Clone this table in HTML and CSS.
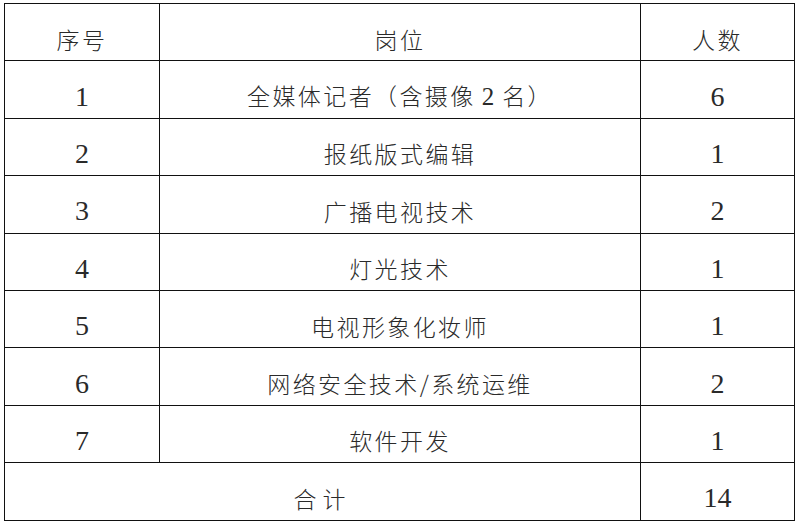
FILE: index.html
```html
<!DOCTYPE html>
<html lang="zh-CN">
<head>
<meta charset="utf-8">
<title>岗位表</title>
<link rel="stylesheet" href="styles.css">
</head>
<body>
<table class="jobs">
  <colgroup>
    <col class="c-no">
    <col class="c-post">
    <col class="c-num">
  </colgroup>
  <tr><td class="cjk">序号</td><td class="cjk">岗位</td><td class="cjk">人数</td></tr>
  <tr><td class="num">1</td><td class="cjk">全媒体记者（含摄像<span class="inline-num">2</span>名）</td><td class="num">6</td></tr>
  <tr><td class="num">2</td><td class="cjk">报纸版式编辑</td><td class="num">1</td></tr>
  <tr><td class="num">3</td><td class="cjk">广播电视技术</td><td class="num">2</td></tr>
  <tr><td class="num">4</td><td class="cjk">灯光技术</td><td class="num">1</td></tr>
  <tr><td class="num">5</td><td class="cjk">电视形象化妆师</td><td class="num">1</td></tr>
  <tr><td class="num">6</td><td class="cjk">网络安全技术/系统运维</td><td class="num">2</td></tr>
  <tr><td class="num">7</td><td class="cjk">软件开发</td><td class="num">1</td></tr>
  <tr><td class="cjk total" colspan="2">合计</td><td class="num">14</td></tr>
</table>
</body>
</html>
```

FILE: styles.css
```css
html, body {
  margin: 0;
  padding: 0;
  background: #ffffff;
}

body {
  padding: 3px 0 0 4px;
}

.jobs {
  border-collapse: collapse;
  table-layout: fixed;
  width: 790px;
}

.c-no { width: 155px; }
.c-post { width: 481px; }
.c-num { width: 154px; }

.jobs tr {
  height: 57.4px;
}

.jobs td {
  border: 1px solid #111111;
  text-align: center;
  vertical-align: middle;
  padding: 14px 0 0 0;
  color: #2a2a2a;
  line-height: 1;
}

.cjk {
  font-family: "Noto Sans CJK SC", "Noto Sans", sans-serif;
  font-size: 23px;
  letter-spacing: 2.4px;
  font-weight: 300;
  color: #3a3a3a;
}

.num {
  font-family: "Liberation Serif", "Times New Roman", serif;
  font-size: 28px;
  letter-spacing: 0;
  color: #1a1a1a;
}

.inline-num {
  font-family: "Liberation Serif", "Times New Roman", serif;
  font-size: 25px;
  letter-spacing: 0;
  padding: 0 8px 0 6px;
  color: #2a2a2a;
}

.total {
  letter-spacing: 6px;
}
```
